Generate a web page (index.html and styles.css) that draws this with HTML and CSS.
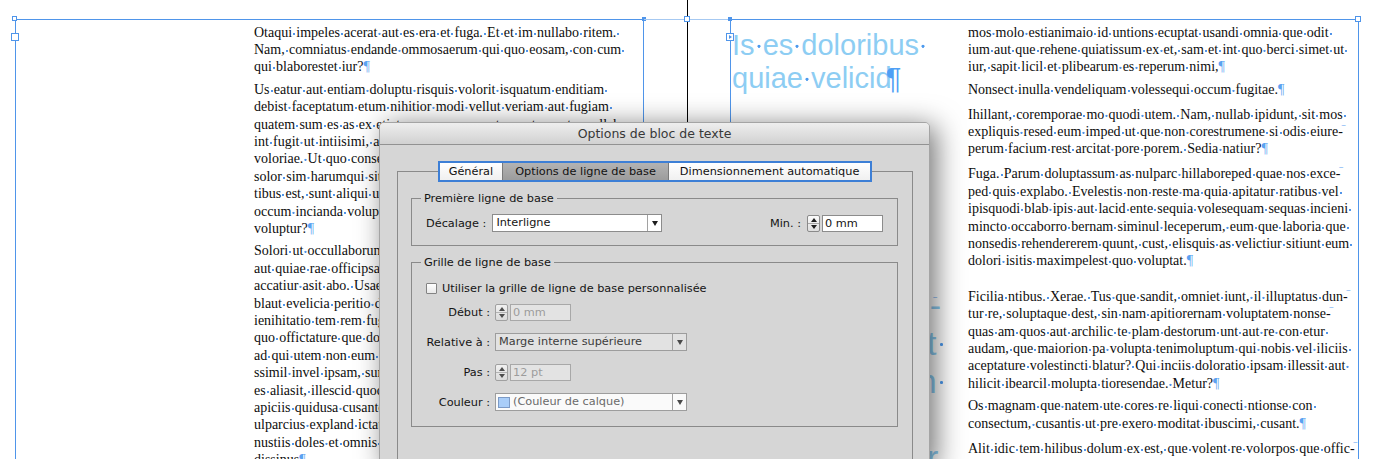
FILE: index.html
```html
<!DOCTYPE html>
<html lang="fr">
<head>
<meta charset="utf-8">
<title>Options de bloc de texte</title>
<link rel="stylesheet" href="styles.css">
</head>
<body>
<div class="spread">
  <div class="spine"></div>
  <div class="frames">
    <section class="frame frame-left">
      <span class="handle hollow h-tl"></span>
      <span class="handle filled h-tr"></span>
      <span class="inport"></span>
      <div class="copy col-left">
        <p class="para">
          <span class="l">Otaqui impeles acerat aut es era et fuga. Et et im nullabo ritem. </span>
          <span class="l">Nam, comniatus endande ommosaerum qui quo eosam, con cum </span>
          <span class="l">qui blaborestet iur?<span class="pm">¶</span></span>
        </p>
        <p class="para">
          <span class="l">Us eatur aut entiam doluptu risquis volorit isquatum enditiam </span>
          <span class="l">debist faceptatum etum nihitior modi vellut veriam aut fugiam </span>
          <span class="l">quatem sum es as ex etiatem nonsequam et quunto ventem ullabo </span>
          <span class="l">int fugit ut intiisimi, aliquae preperum fuga. Ut et eos que </span>
          <span class="l">voloriae. Ut quo consequ iasperum quiatur, iducimus ressequi </span>
          <span class="l">solor sim harumqui sitatur sam, quis sint eum eos doluptis </span>
          <span class="l">tibus est, sunt aliqui ullaut inverum quam ipsum lant es </span>
          <span class="l">occum incianda voluptas ditium sam, to odit ut facea </span>
          <span class="l">voluptur?<span class="pm">¶</span></span>
        </p>
        <p class="para">
          <span class="l">Solori ut occullaborum ut volorem. Nem sed quiam quam, </span>
          <span class="l">aut quiae rae officipsam ipitaquam eos eost, sum res </span>
          <span class="l">accatiur asit abo. Usaeptatia quamusa natiasped ut </span>
          <span class="l">blaut evelicia peritio doluptat ipsandipit ut aut </span>
          <span class="l">ienihitatio tem rem fugiate molorro vitatem quiam </span>
          <span class="l">quo offictature que dolorum quam es rerchil </span>
          <span class="l">ad qui utem non eum quatur aute volorrum </span>
          <span class="l">ssimil invel ipsam, sum ut volest, omnis </span>
          <span class="l">es aliasit, illescid quodis sin consequid </span>
          <span class="l">apiciis quidusa cusanto oditiam la sinis </span>
          <span class="l">ulparcius expland ictatur, quuntur sunt </span>
          <span class="l">nustiis doles et omnis eum doloria </span>
          <span class="l">dissinus<span class="pm">¶</span></span>
        </p>
      </div>
    </section>
    <div class="bridge"><span class="handle hollow h-mid"></span></div>
    <section class="frame frame-right">
      <span class="handle filled h-tl2"></span>
      <span class="handle hollow h-tr2"></span>
      <span class="inport thread"></span>
      <div class="col-big">
        <p class="big">
          <span class="l">Is es doloribus </span>
          <span class="l">quiae velicid<span class="pm pm-big">¶</span></span>
        </p>
        <p class="big big2">
          <span class="l inset-s">sin con<span class="hy">-</span></span>
          <span class="l">volut </span>
          <span class="l">ut con </span>
          <span class="l inset">qui ut </span>
          <span class="l">ditatur.</span>
        </p>
      </div>
      <div class="copy col-right">
        <p class="para">
          <span class="l">mos molo estianimaio id untions ecuptat usandi omnia que odit </span>
          <span class="l">ium aut que rehene quiatissum ex et, sam et int quo berci simet ut </span>
          <span class="l">iur, sapit licil et plibearum es reperum nimi,<span class="pm">¶</span></span>
        </p>
        <p class="para">
          <span class="l">Nonsect inulla vendeliquam volessequi occum fugitae.<span class="pm">¶</span></span>
        </p>
        <p class="para loose">
          <span class="l">Ihillant, coremporae mo quodi utem. Nam, nullab ipidunt, sit mos </span>
          <span class="l">expliquis resed eum imped ut que non corestrumene si odis eiure<span class="hy">-</span></span>
          <span class="l">perum facium rest arcitat pore porem. Sedia natiur?<span class="pm">¶</span></span>
        </p>
        <p class="para loose">
          <span class="l">Fuga. Parum doluptassum as nulparc hillaboreped quae nos exce<span class="hy">-</span></span>
          <span class="l">ped quis explabo. Evelestis non reste ma quia apitatur ratibus vel </span>
          <span class="l">ipisquodi blab ipis aut lacid ente sequia volesequam sequas incieni </span>
          <span class="l">mincto occaborro bernam siminul leceperum, eum que laboria que </span>
          <span class="l">nonsedis rehendererem quunt, cust, elisquis as velictiur sitiunt eum </span>
          <span class="l">dolori isitis maximpelest quo voluptat.<span class="pm">¶</span></span>
        </p>
        <p class="para gap">
          <span class="l">Ficilia ntibus. Xerae. Tus que sandit, omniet iunt, il illuptatus dun<span class="hy">-</span></span>
          <span class="l">tur re, soluptaque dest, sin nam apitiorernam voluptatem nonse<span class="hy">-</span></span>
          <span class="l">quas am quos aut archilic te plam destorum unt aut re con etur </span>
          <span class="l">audam, que maiorion pa volupta tenimoluptum qui nobis vel iliciis </span>
          <span class="l">aceptature volestincti blatur? Qui inciis doloratio ipsam illessit aut </span>
          <span class="l">hilicit ibearcil molupta tioresendae. Metur?<span class="pm">¶</span></span>
        </p>
        <p class="para">
          <span class="l">Os magnam que natem ute cores re liqui conecti ntionse con </span>
          <span class="l">consectum, cusantis ut pre exero moditat ibuscimi, cusant.<span class="pm">¶</span></span>
        </p>
        <p class="para loose">
          <span class="l">Alit idic tem hilibus dolum ex est, que volent re volorpos que offic<span class="hy">-</span></span>
        </p>
      </div>
    </section>
  </div>

  <div class="dialog">
    <div class="titlebar">Options de bloc de texte</div>
    <div class="panel">
      <div class="tabs">
        <div class="tabset">
          <span class="tab">Général</span><span class="tab active">Options de ligne de base</span><span class="tab">Dimensionnement automatique</span>
        </div>
      </div>
      <fieldset class="group group1">
        <legend>Première ligne de base</legend>
        <div class="row">
          <div class="field">
            <span class="cap">Décalage :</span>
            <div class="select sel-a"><span class="val">Interligne</span><span class="drop"></span></div>
          </div>
          <div class="field">
            <span class="cap">Min. :</span>
            <span class="stepper"></span>
            <span class="input">0 mm</span>
          </div>
        </div>
      </fieldset>
      <fieldset class="group group2">
        <legend>Grille de ligne de base</legend>
        <div class="chk-row"><span class="checkbox"></span><span>Utiliser la grille de ligne de base personnalisée</span></div>
        <div class="frow first">
          <span class="cap">Début :</span>
          <span class="stepper off"></span>
          <span class="input off">0 mm</span>
        </div>
        <div class="frow">
          <span class="cap">Relative à :</span>
          <div class="select sel-b dim"><span class="val">Marge interne supérieure</span><span class="drop"></span></div>
        </div>
        <div class="frow">
          <span class="cap">Pas :</span>
          <span class="stepper off"></span>
          <span class="input off">12 pt</span>
        </div>
        <div class="frow">
          <span class="cap">Couleur :</span>
          <div class="select sel-b soft"><span class="swatch"></span><span class="val">(Couleur de calque)</span><span class="drop"></span></div>
        </div>
      </fieldset>
    </div>
  </div>
</div>
<script src="script.js"></script>
</body>
</html>
```

FILE: styles.css
```css
* { box-sizing: border-box; }
html, body { margin: 0; padding: 0; }
body { width: 1374px; height: 459px; overflow: hidden; background: #fff; }
p { margin: 0; }

.spread { position: relative; width: 1374px; height: 459px; overflow: hidden; }
.spine { position: absolute; left: 687px; top: 0; width: 1px; height: 459px; background: #000; }

.frames { display: flex; align-items: flex-start; padding: 19px 0 0 15px; height: 459px; }
.frame { position: relative; flex: none; width: 629px; height: 440px; border: 1px solid #4f95ea; border-bottom: 0; }
.frame-left { padding: 3.5px 0 0 238px; }
.frame-right { display: flex; }
.bridge { position: relative; flex: none; width: 86px; height: 1px; border-top: 1px solid #a6c9f2; }

.handle { position: absolute; width: 6px; height: 6px; }
.handle.hollow { background: #fff; border: 1px solid #4f95ea; }
.handle.filled { background: #4f95ea; width: 4px; height: 4px; }
.h-tl { left: -4px; top: -4px; width: 5px; height: 5px; }
.h-tr { right: -3px; top: -3px; }
.h-mid { left: 40px; top: -4px; }
.h-tl2 { left: -3px; top: -3px; }
.h-tr2 { right: -3px; top: -4px; }
.inport { position: absolute; left: -5px; top: 13px; width: 8px; height: 8px; border: 1px solid #4f95ea; background: #fff; display: flex; align-items: center; justify-content: center; }
.inport.thread::after { content: ""; border-left: 3px solid #4f95ea; border-top: 2.5px solid transparent; border-bottom: 2.5px solid transparent; }

.copy { font-family: "Liberation Serif", "Times New Roman", serif; font-size: 14px; line-height: 17.4px; word-spacing: 0.7px; color: #0d0d0d; }
.col-left { width: 380px; }
.col-right { flex: none; width: 382px; padding-top: 3.5px; }
.l { display: block; white-space: pre; }
.para + .para { margin-top: 5px; }
.para + .para.loose { margin-top: 7.5px; }
.para + .para.gap { margin-top: 18px; }

.sp { background: radial-gradient(circle at 50% 59%, #4f93e8 0.8px, rgba(79, 147, 232, 0) 1.4px); }
.pm { color: #5ba2f1; }
.hy { position: relative; }
.hy::after { content: "~"; position: absolute; left: 3px; top: -7px; font-family: "Liberation Sans", sans-serif; font-size: 8px; color: #5ba2f1; }

.col-big { flex: none; width: 237px; padding: 9px 0 0 1px; }
.big { font-family: "Liberation Sans", Arial, sans-serif; font-size: 29px; line-height: 33px; color: #8dcdf3; word-spacing: 0; }
.big .sp { background: radial-gradient(circle at 50% 54%, #4d9aee 1.2px, rgba(77, 154, 238, 0) 1.9px); }
.pm-big { color: #4f9ff5; margin-left: -6px; }
.big2 { margin-top: 191px; font-size: 34px; line-height: 38px; text-align: right; padding-right: 22px; }
.big2 .inset { padding-right: 17px; }
.big2 .inset-s { padding-right: 5px; }

/* dialog */
.dialog { position: absolute; left: 379px; top: 122px; width: 551px; height: 345px; background: #d6d6d6; border: 1px solid #a4a4a4; border-radius: 5px 5px 0 0; box-shadow: 6px 4px 28px rgba(0, 0, 0, 0.55); font-family: "DejaVu Sans", Verdana, sans-serif; font-size: 11.3px; color: #141414; }
.titlebar { height: 22px; border-bottom: 1px solid #929292; border-radius: 4px 4px 0 0; background: linear-gradient(#eeeeee, #d1d1d1); text-align: center; font-size: 12.5px; line-height: 21px; color: #383838; }
.panel { margin: 26px 16px 0 17px; height: 300px; border: 1px solid #8a8a8a; }
.tabs { display: flex; justify-content: center; margin-top: -11px; }
.tabset { display: flex; height: 21px; border: 2px solid #3d7fd6; background: #fff; }
.tab { padding: 0 9px; line-height: 17px; border-left: 1px solid #7a7a7a; background: linear-gradient(#ffffff, #f0f0f0); color: #111; }
.tab:first-child { border-left: 0; }
.tab:last-child { padding: 0 11px; }
.tab.active { padding: 0 12px; background: linear-gradient(#b3b3b3, #9c9c9c); }

.group { margin: 10px 14px 0 13px; padding: 9px 14px 13px 14px; border: 1px solid #8a8a8a; min-width: 0; }
.group legend { padding: 0 3px; margin-left: -5px; line-height: 13px; }
.group2 { padding: 10px 14px 15px 14px; }

.row { display: flex; align-items: center; justify-content: space-between; height: 18px; }
.field { display: flex; align-items: center; }
.field .cap { margin-right: 6px; }

.select { display: flex; align-items: center; height: 18px; border: 1px solid #8c8c8c; background: #fff; white-space: nowrap; }
.select .val { flex: 1; padding-left: 3px; line-height: 16px; }
.select .drop { width: 14px; height: 16px; border-left: 1px solid #a2a2a2; display: flex; align-items: center; justify-content: center; }
.select .drop::after { content: ""; border-left: 3.5px solid transparent; border-right: 3.5px solid transparent; border-top: 5px solid #1e1e1e; }
.sel-a { width: 170px; }
.sel-b { width: 192px; }
.select.dim { background: #e2e2e2; border-color: #9d9d9d; color: #3c3c3c; }
.select.dim .drop::after { border-top-color: #4a4a4a; }
.select.soft { background: #fafafa; border-color: #9d9d9d; color: #6a6a6a; }
.select.soft .drop::after { border-top-color: #4a4a4a; }
.swatch { width: 12px; height: 11px; margin: 0 3px 0 2px; background: #a9cdf8; border: 1px solid #7c9ac6; }
.select.soft .val { padding-left: 0; }

.stepper { display: flex; flex-direction: column; align-items: center; justify-content: space-between; width: 13px; height: 17px; padding: 2px 0; margin-right: 2px; border: 1px solid #8a8a8a; border-radius: 2px; background: linear-gradient(to bottom, transparent 7px, #a8a8a8 7px, #a8a8a8 8px, transparent 8px), linear-gradient(#fbfbfb, #dedede); }
.stepper::before { content: ""; border-left: 3.5px solid transparent; border-right: 3.5px solid transparent; border-bottom: 4px solid #1e1e1e; }
.stepper::after { content: ""; border-left: 3.5px solid transparent; border-right: 3.5px solid transparent; border-top: 4px solid #1e1e1e; }
.stepper.off { background: linear-gradient(to bottom, transparent 7px, #b4b4b4 7px, #b4b4b4 8px, transparent 8px), linear-gradient(#f1f1f1, #dadada); border-color: #a0a0a0; }
.stepper.off::before { border-bottom-color: #4e4e4e; }
.stepper.off::after { border-top-color: #4e4e4e; }

.input { display: block; width: 61px; height: 17px; padding-left: 2px; line-height: 15px; border: 1px solid #8c8c8c; background: #fff; }
.input.off { background: #e3e3e3; border-color: #a8a8a8; color: #9c9c9c; }

.chk-row { display: flex; align-items: center; height: 18px; }
.checkbox { width: 11px; height: 11px; margin-right: 5px; border: 1px solid #838383; border-radius: 1px; background: linear-gradient(#ffffff, #e9e9e9); }
.frow { display: flex; align-items: center; height: 18px; margin-top: 12px; }
.frow.first { margin-top: 6px; }
.frow .cap { width: 64px; margin-right: 5px; text-align: right; white-space: nowrap; }
```

FILE: script.js
```js
(function () {
  var lines = document.querySelectorAll('.l');
  Array.prototype.forEach.call(lines, function (line) {
    var walker = document.createTreeWalker(line, NodeFilter.SHOW_TEXT, null);
    var nodes = [];
    while (walker.nextNode()) nodes.push(walker.currentNode);
    nodes.forEach(function (node) {
      var text = node.nodeValue;
      if (text.indexOf(' ') === -1) return;
      var frag = document.createDocumentFragment();
      text.split(' ').forEach(function (part, i) {
        if (i > 0) {
          var sp = document.createElement('span');
          sp.className = 'sp';
          sp.textContent = ' ';
          frag.appendChild(sp);
        }
        if (part) frag.appendChild(document.createTextNode(part));
      });
      node.parentNode.replaceChild(frag, node);
    });
  });
})();
```
